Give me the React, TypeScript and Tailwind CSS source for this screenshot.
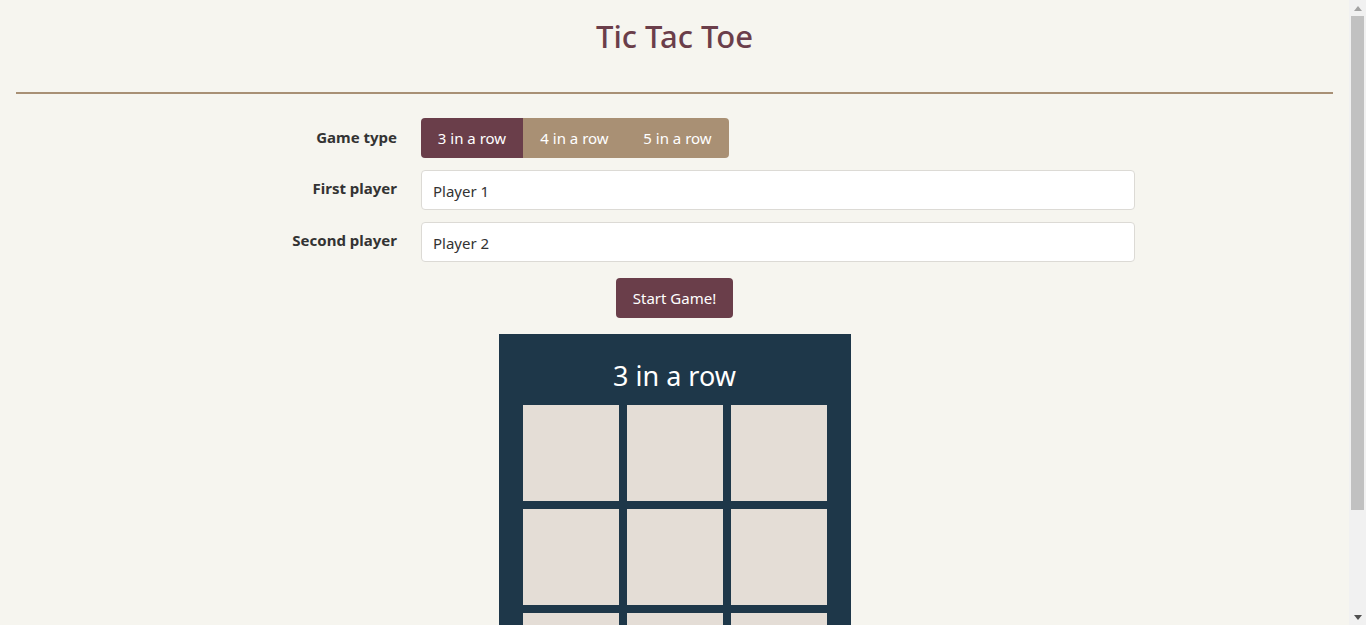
import React from "react";

export default function App() {
  const cells = Array.from({ length: 9 });
  return (
    <div className="h-screen flex overflow-hidden bg-[#f6f5ef] text-[#333333]" style={{ fontFamily: '"Noto Sans", "Open Sans", sans-serif' }}>
      <main className="flex-1 px-4 overflow-hidden">
        <h1 className="text-center text-[31px] leading-[40px] pt-[16px] pb-[36px] text-[#6b3e4a] font-medium">Tic Tac Toe</h1>
        <div className="h-[2px] bg-[#a89075]" />
        <div className="w-[921px] mx-auto pt-[24px]">
          <div className="flex items-start h-[40px] mb-[12px]">
            <label className="w-[183px] text-right font-bold text-[15px] leading-[24px] pt-[7px]">Game type</label>
            <div className="ml-[24px] flex rounded-[4px] overflow-hidden text-[15px] text-white h-[40px]">
              <button className="bg-[#6a3e4a] w-[102px]">3 in a row</button>
              <button className="bg-[#a99074] w-[103px]">4 in a row</button>
              <button className="bg-[#a99074] w-[103px]">5 in a row</button>
            </div>
          </div>
          <div className="flex items-start h-[40px] mb-[12px]">
            <label className="w-[183px] text-right font-bold text-[15px] leading-[24px] pt-[6px]">First player</label>
            <input className="ml-[24px] flex-1 h-[40px] bg-white border border-[#dcdad5] rounded-[4px] px-[11px] text-[15px] text-[#333] pt-[2px]" defaultValue="Player 1" />
          </div>
          <div className="flex items-start h-[40px]">
            <label className="w-[183px] text-right font-bold text-[15px] leading-[24px] pt-[6px]">Second player</label>
            <input className="ml-[24px] flex-1 h-[40px] bg-white border border-[#dcdad5] rounded-[4px] px-[11px] text-[15px] text-[#333] pt-[2px]" defaultValue="Player 2" />
          </div>
        </div>
        <div className="flex justify-center mt-[16px]">
          <button className="bg-[#6a3e4a] text-white text-[15px] h-[40px] w-[117px] rounded-[4px]">Start Game!</button>
        </div>
        <div className="flex justify-center mt-[16px]">
          <div className="bg-[#1e3749] w-[352px] px-[24px] pb-[24px]">
            <div className="text-center text-white text-[27px] leading-[40px] pt-[22px] h-[71px]">3 in a row</div>
            <div className="grid grid-cols-3 gap-[8px]">
              {cells.map((_, i) => (
                <div key={i} className="h-[96px] bg-[#e4ddd6]" />
              ))}
            </div>
          </div>
        </div>
      </main>
      <aside className="w-[17px] h-full bg-[#f1f1f1] flex flex-col items-center">
        <div className="h-[16px] flex items-center justify-center">
          <svg width="8" height="5" viewBox="0 0 8 5"><path d="M4 0 L8 5 L0 5 Z" fill="#a3a3a3" /></svg>
        </div>
        <div className="w-[13px] h-[494px] bg-[#c1c1c1]" />
        <div className="flex-1" />
        <div className="h-[16px] flex items-center justify-center">
          <svg width="8" height="5" viewBox="0 0 8 5"><path d="M0 0 L8 0 L4 5 Z" fill="#505050" /></svg>
        </div>
      </aside>
    </div>
  );
}
